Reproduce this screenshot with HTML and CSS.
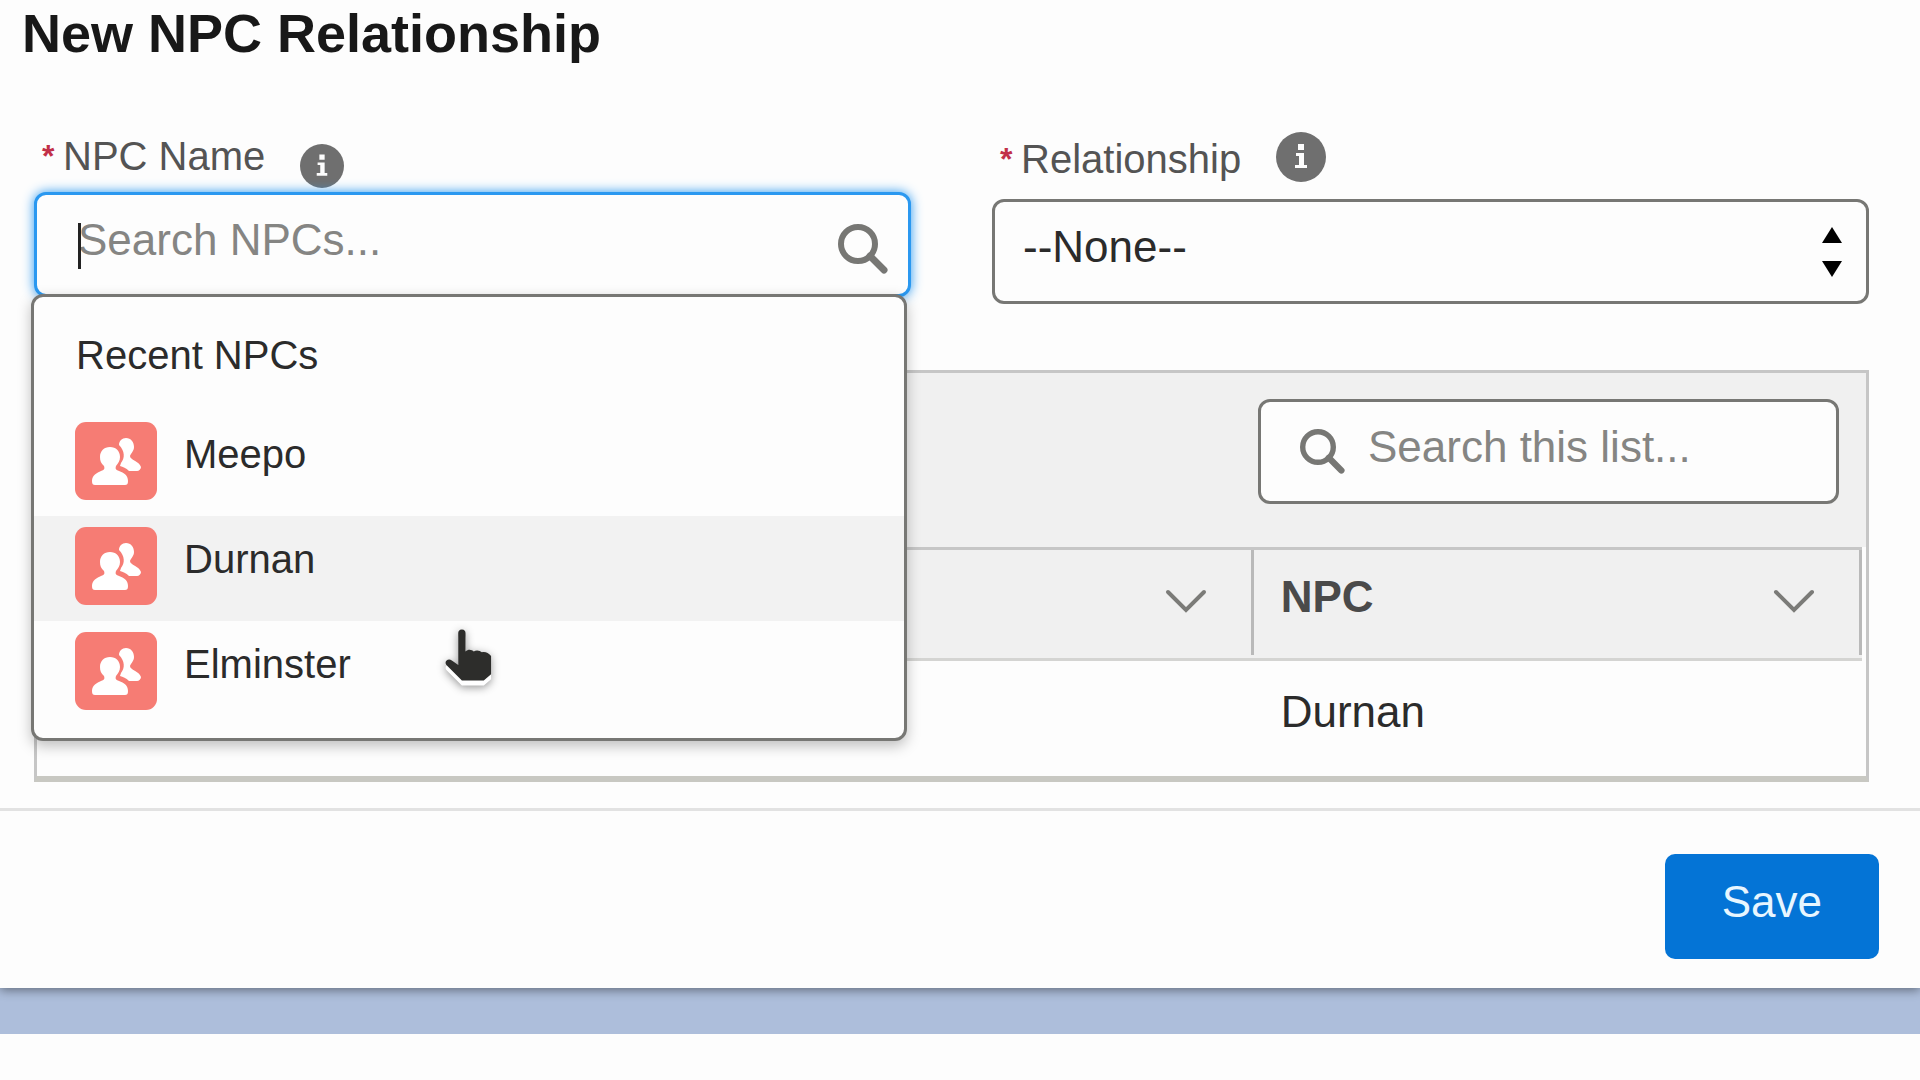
FILE: index.html
```html
<!DOCTYPE html>
<html lang="en">
<head>
<meta charset="UTF-8" />
<meta name="viewport" content="width=device-width, initial-scale=1" />
<title>New NPC Relationship</title>
<link rel="stylesheet" href="styles.css">
</head>
<body>

<!-- shared icons -->
<svg class="sprite" aria-hidden="true">
  <symbol id="info" viewBox="0 0 50 50">
    <circle cx="25" cy="25" r="25" fill="#6f6f6f" />
    <path fill="#fdfdfd" d="M22 12h6v6h-6zM20 21h8v12h3v3H19v-3h4v-9h-3z" />
  </symbol>
  <symbol id="search" viewBox="0 0 50 50">
    <circle cx="20" cy="20" r="17" fill="none" stroke="#777774" stroke-width="6" />
    <path d="M32 32L46 46" stroke="#777774" stroke-width="7" stroke-linecap="round" />
  </symbol>
  <symbol id="chevron" viewBox="0 0 42 26">
    <path d="M3 4L21 22L39 4" fill="none" stroke="#7b7b78" stroke-width="4" stroke-linecap="round" />
  </symbol>
  <symbol id="people" viewBox="0 0 82 78">
    <rect width="82" height="78" rx="11" fill="#f67c74" />
    <path fill="#fff" d="M51 16c5 0 8 4 8 9 0 4-3 6-4 9 0 4 9 5 11 11 0 2-2 4-4 4h-8c-3-3-6-4-9-5l1-3c4-5 4-12-2-18 0-4 3-7 7-7z" />
    <path fill="#fff" d="M35 25c6 0 10 4 10 10 0 4-2 6-4 9-1 3 0 4 3 5 5 2 9 4 9 10 0 3-1 4-3 4H20c-2 0-3-1-3-4 0-6 5-8 9-10 3-1 4-2 3-5-3-3-4-5-4-9 0-6 4-10 10-10z" />
  </symbol>
</svg>

<div class="modal">
  <h2 class="title">New NPC Relationship</h2>

  <form class="form" id="npcForm" autocomplete="off">
    <div class="field">
      <div class="label-row">
        <span class="required">*</span>
        <label for="npcName">NPC Name</label>
        <svg class="info"><use href="#info" /></svg>
      </div>
      <div class="lookup">
        <input type="text" id="npcName" class="control focused" placeholder="Search NPCs..." />
        <span class="caret"></span>
        <svg class="search-icon"><use href="#search" /></svg>
        <div class="dropdown">
          <div class="dropdown-title">Recent NPCs</div>
          <ul class="options">
            <li><svg class="avatar"><use href="#people" /></svg><span>Meepo</span></li>
            <li class="active"><svg class="avatar"><use href="#people" /></svg><span>Durnan</span></li>
            <li><svg class="avatar"><use href="#people" /></svg><span>Elminster</span></li>
          </ul>
          <svg class="pointer" viewBox="0 0 64 68">
            <path d="M22 5c3 0 4 2 4 4v20c3-3 7-2 9 0 3-2 7-1 9 1 4-1 7 1 10 4v20l-8 7H22L5 44c-3-4 2-8 6-5l7 5V9c0-2 1-4 4-4z" />
          </svg>
        </div>
      </div>
    </div>

    <div class="field">
      <div class="label-row large">
        <span class="required">*</span>
        <label for="relationship">Relationship</label>
        <svg class="info"><use href="#info" /></svg>
      </div>
      <div class="select-wrap">
        <select id="relationship" class="control">
          <option>--None--</option>
        </select>
        <svg class="arrows" viewBox="0 0 22 50"><path d="M11 0l10 16H1zM11 50L1 34h20z" /></svg>
      </div>
    </div>
  </form>

  <div class="list">
    <div class="toolbar">
      <div class="list-search">
        <svg class="search-icon"><use href="#search" /></svg>
        <input type="text" class="control" aria-label="Search this list" placeholder="Search this list..." />
      </div>
    </div>
    <table>
      <thead>
        <tr>
          <th><div class="head"></div></th>
          <th><div class="head"><span></span><svg class="chevron"><use href="#chevron" /></svg></div></th>
          <th><div class="head"><span>NPC</span><svg class="chevron"><use href="#chevron" /></svg></div></th>
        </tr>
      </thead>
      <tbody>
        <tr>
          <td></td>
          <td></td>
          <td>Durnan</td>
        </tr>
      </tbody>
    </table>
  </div>

  <div class="footer">
    <button type="submit" form="npcForm" class="save">Save</button>
  </div>
</div>

<div class="page-below"></div>

</body>
</html>
```
FILE: styles.css
```css
* { box-sizing: border-box; }
body {
  margin: 0;
  min-height: 100vh;
  display: flex;
  flex-direction: column;
  font-family: "Liberation Sans", Arial, sans-serif;
  font-size: 40px;
  color: #2b2b2b;
  background: #adbedb;
}
svg { display: block; flex: none; }
.sprite { position: absolute; width: 0; height: 0; }
.modal {
  background: #fdfdfd;
  box-shadow: 0 2px 10px rgba(0, 0, 0, 0.45);
}
.title {
  margin: 0;
  padding-left: 22px;
  font-size: 54px;
  line-height: 66px;
  color: #181818;
}

/* form */
.form {
  display: grid;
  grid-template-columns: 1fr 1fr;
  gap: 81px;
  padding: 66px 51px 66px 34px;
}
.label-row {
  display: flex;
  height: 56px;
  margin-bottom: 4px;
  padding-left: 8px;
  line-height: 48px;
  color: #545454;
}
.label-row .info {
  width: 44px;
  height: 44px;
  margin-left: 35px;
  align-self: flex-end;
}
.label-row.large {
  height: 50px;
  margin-bottom: 17px;
  line-height: 54px;
}
.label-row.large .info { width: 50px; height: 50px; }
.required {
  width: 21px;
  font-size: 32px;
  font-weight: bold;
  color: #c23048;
}
.control {
  display: block;
  width: 100%;
  height: 105px;
  padding: 0 28px 10px;
  border: 3px solid #777774;
  border-radius: 12px;
  background: #fdfdfd;
  color: #2b2b2b;
  font-family: inherit;
  font-size: 44px;
  outline: none;
}
.control::placeholder { color: #858583; opacity: 1; }
.lookup { position: relative; }
.lookup .control { padding-left: 41px; }
.control.focused {
  border-color: #2a98f0;
  box-shadow: 0 0 12px #2a98f0;
}
.search-icon {
  position: absolute;
  top: 32px;
  right: 23px;
  width: 50px;
  height: 50px;
}
.caret {
  position: absolute;
  top: 31px;
  left: 44px;
  width: 3px;
  height: 46px;
  background: #222;
}
.select-wrap { position: relative; }
select.control { appearance: none; }
.arrows {
  position: absolute;
  top: 28px;
  right: 26px;
  width: 22px;
  height: 50px;
  pointer-events: none;
}

/* recent items menu */
.dropdown {
  position: absolute;
  z-index: 2;
  top: 102px;
  left: -3px;
  right: 4px;
  padding: 10px 0 12px;
  border: 3px solid #777774;
  border-radius: 12px;
  background: #fdfdfd;
  box-shadow: 0 5px 14px rgba(0, 0, 0, 0.25);
}
.dropdown-title {
  padding-left: 42px;
  margin-bottom: 8px;
  line-height: 96px;
}
.options { list-style: none; margin: 0; padding: 0; }
.options li {
  display: flex;
  gap: 27px;
  height: 105px;
  padding: 11px 41px 0;
  line-height: 64px;
}
.options li.active { background: #f2f2f2; }
.avatar { width: 82px; height: 78px; }
.pointer {
  position: absolute;
  left: 405px;
  bottom: 51px;
  width: 64px;
  height: 62px;
  fill: #2d2d2b;
  filter: drop-shadow(0 5px 0 #fff) drop-shadow(0 2px 4px rgba(0, 0, 0, 0.4));
}

/* related list */
.list {
  margin: 0 51px 26px 34px;
  border: 3px solid #c6c6c6;
  border-bottom: 6px solid #c8c8c2;
}
.toolbar {
  display: flex;
  justify-content: flex-end;
  padding: 26px 27px 43px;
  background: #f0f0f0;
}
.list-search { position: relative; width: 581px; }
.list-search .control { padding-left: 107px; }
.list-search .search-icon {
  top: 30px;
  left: 42px;
  width: 45px;
  height: 45px;
}
table {
  width: 100%;
  table-layout: fixed;
  border-collapse: separate;
  border-spacing: 0;
  padding-right: 4px;
  font-size: 44px;
}
thead { background: #f0f0f0; }
th {
  padding: 0 0 3px;
  border-top: 3px solid #c6c6c6;
  border-bottom: 3px solid #d4d4d2;
  text-align: left;
  color: #4a4a4a;
}
.head {
  display: flex;
  justify-content: space-between;
  height: 105px;
  padding: 0 44px 0 27px;
  border-right: 3px solid #b9b9b9;
  line-height: 94px;
}
.chevron {
  width: 42px;
  height: 26px;
  margin-top: 38px;
}
td {
  height: 115px;
  padding: 0 27px 14px;
}

.footer {
  display: flex;
  justify-content: flex-end;
  padding: 43px 41px 29px;
  border-top: 3px solid #e2e2e2;
}
.save {
  height: 105px;
  padding: 0 57px 10px;
  border: none;
  border-radius: 10px;
  background: #0474d6;
  color: #e8f6ff;
  font-family: inherit;
  font-size: 44px;
  cursor: pointer;
}
.page-below {
  flex: 1;
  margin-top: 46px;
  background: #fdfdfd;
}
```
